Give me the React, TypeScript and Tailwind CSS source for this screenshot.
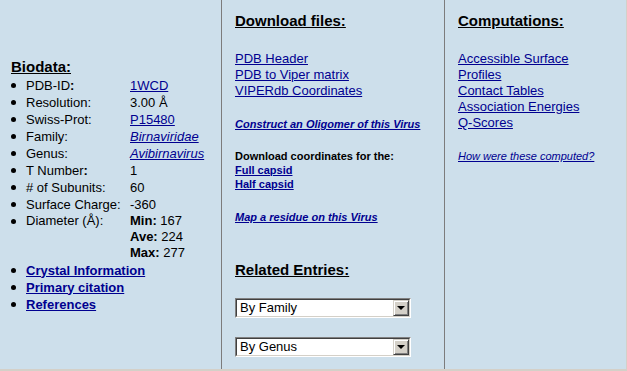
const link = "text-[#000090] underline";

function Dot() {
  return <span className="mt-[6px] mr-[10px] h-[5px] w-[5px] shrink-0 rounded-full bg-black" />;
}

function Row({ label, children }: { label: React.ReactNode; children?: React.ReactNode }) {
  return (
    <li className="flex leading-[17px]">
      <Dot />
      <span className="w-[104px] shrink-0">{label}</span>
      <span>{children}</span>
    </li>
  );
}

function FakeSelect({ value }: { value: string }) {
  return (
    <div className="w-[176px] border border-t-[#808080] border-l-[#808080] border-b-white border-r-white">
      <div className="flex h-[18px] items-center border border-t-[#404040] border-l-[#404040] border-b-[#d4d0c8] border-r-[#d4d0c8] bg-white">
        <span className="flex-1 pl-[3px] text-[13px] leading-[16px] text-black">{value}</span>
        <div className="flex h-[16px] w-[16px] items-center justify-center border border-t-[#d4d0c8] border-l-[#d4d0c8] border-b-[#404040] border-r-[#404040] bg-[#d4d0c8] shadow-[inset_1px_1px_0_#fff,inset_-1px_-1px_0_#808080]">
          <span className="h-0 w-0 border-x-[4px] border-t-[4px] border-x-transparent border-t-black" />
        </div>
      </div>
    </div>
  );
}

export default function App() {
  return (
    <div className="h-[371px] w-[627px] bg-[#d4d0c8] font-['Liberation_Sans',Arial,sans-serif] text-black">
      <div className="flex h-[369px] w-[626px] bg-[#cddfeb]">
        {/* biodata */}
        <section className="flex w-[222px] shrink-0 flex-col justify-center border-r border-[#7c7c7c] pl-[11px] pt-[1px]">
          <h2 className="mb-[1px] text-[15px] font-bold leading-[18px] underline">Biodata:</h2>
          <ul className="text-[13px]">
            <Row label={<>PDB-ID<b>:</b></>}><a className={link}>1WCD</a></Row>
            <Row label="Resolution:">3.00 Å</Row>
            <Row label="Swiss-Prot:"><a className={link}>P15480</a></Row>
            <Row label="Family:"><a className={`${link} italic`}>Birnaviridae</a></Row>
            <Row label="Genus:"><a className={`${link} italic`}>Avibirnavirus</a></Row>
            <Row label={<>T Number<b>:</b></>}>1</Row>
            <Row label="# of Subunits:">60</Row>
            <Row label="Surface Charge:">-360</Row>
            <li className="flex leading-[16px]">
              <Dot />
              <span className="w-[104px] shrink-0">Diameter (Å):</span>
              <div className="mb-[1px]">
                <div><b>Min:</b> 167</div>
                <div><b>Ave:</b> 224</div>
                <div><b>Max:</b> 277</div>
              </div>
            </li>
            <li className="flex leading-[17px]"><Dot /><a className={`${link} font-bold`}>Crystal Information</a></li>
            <li className="flex leading-[17px]"><Dot /><a className={`${link} font-bold`}>Primary citation</a></li>
            <li className="flex leading-[17px]"><Dot /><a className={`${link} font-bold`}>References</a></li>
          </ul>
        </section>

        {/* downloads */}
        <section className="w-[223px] shrink-0 border-r border-[#7c7c7c] pl-[13px] pt-[12px]">
          <h2 className="text-[15px] font-bold leading-[18px] underline">Download files:</h2>
          <div className="mt-[21px] flex flex-col items-start text-[13px] leading-[16px]">
            <a className={link}>PDB Header</a>
            <a className={link}>PDB to Viper matrix</a>
            <a className={link}>VIPERdb Coordinates</a>
          </div>
          <a className={`${link} mt-[19px] block text-[11px] font-bold italic leading-[13px]`}>Construct an Oligomer of this Virus</a>
          <div className="mt-[18px] flex flex-col items-start text-[11px] font-bold leading-[14px]">
            <span>Download coordinates for the:</span>
            <a className={link}>Full capsid</a>
            <a className={link}>Half capsid</a>
          </div>
          <a className={`${link} mt-[20px] block text-[11px] font-bold italic leading-[13px]`}>Map a residue on this Virus</a>
          <h2 className="mt-[37px] text-[15px] font-bold leading-[18px] underline">Related Entries:</h2>
          <div className="mt-[19px] flex flex-col gap-[19px]">
            <FakeSelect value="By Family" />
            <FakeSelect value="By Genus" />
          </div>
        </section>

        {/* computations */}
        <section className="flex-1 pl-[13px] pt-[12px]">
          <h2 className="text-[15px] font-bold leading-[18px] underline">Computations:</h2>
          <div className="mt-[21px] flex flex-col items-start text-[13px] leading-[16px]">
            <a className={link}>Accessible Surface</a>
            <a className={link}>Profiles</a>
            <a className={link}>Contact Tables</a>
            <a className={link}>Association Energies</a>
            <a className={link}>Q-Scores</a>
          </div>
          <a className={`${link} mt-[19px] block text-[11px] italic leading-[13px]`}>How were these computed?</a>
        </section>
      </div>
    </div>
  );
}
